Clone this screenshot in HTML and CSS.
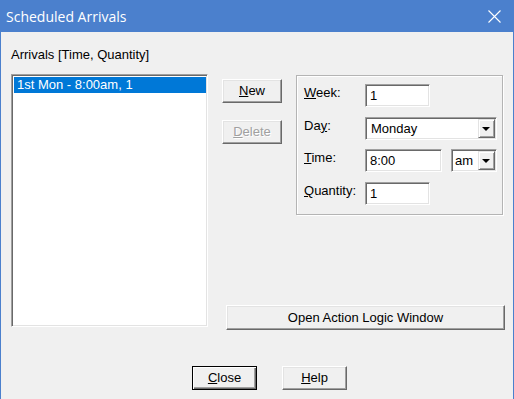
FILE: index.html
```html
<!DOCTYPE html>
<html>
<head lang="en">
    <meta charset="UTF-8">
    <title>Scheduled Arrivals</title>
    <link rel="stylesheet" href="styles.css">
</head>
<body>
<div class="window">
    <div class="titlebar">
        <span class="title">Scheduled Arrivals</span>
        <svg class="close-x" width="13" height="13" viewBox="0 0 13 13">
            <path d="M0.5 0.5 L12.5 12.5 M12.5 0.5 L0.5 12.5" stroke="#fff" stroke-width="1.1" fill="none"/>
        </svg>
    </div>
    <div class="content">
        <div class="caption">Arrivals [Time, Quantity]</div>
        <div class="main">
            <div class="listbox">
                <div class="item selected">1st Mon - 8:00am, 1</div>
            </div>
            <div class="side">
                <div class="top">
                    <div class="btns">
                        <button class="btn"><u>N</u>ew</button>
                        <button class="btn disabled"><u>D</u>elete</button>
                    </div>
                    <div class="group">
                        <label class="lbl"><u>W</u>eek:</label>
                        <div class="field"><span class="input w-short">1</span></div>
                        <label class="lbl">Da<u>y</u>:</label>
                        <div class="field">
                            <span class="combo w-day">Monday<i class="arrow"></i></span>
                        </div>
                        <label class="lbl"><u>T</u>ime:</label>
                        <div class="field">
                            <span class="input w-time">8:00</span>
                            <span class="combo w-ampm">am<i class="arrow"></i></span>
                        </div>
                        <label class="lbl"><u>Q</u>uantity:</label>
                        <div class="field"><span class="input w-short">1</span></div>
                    </div>
                </div>
                <button class="btn wide">Open Action Logic Window</button>
            </div>
        </div>
        <div class="footer">
            <button class="btn foot default"><u>C</u>lose</button>
            <button class="btn foot"><u>H</u>elp</button>
        </div>
    </div>
</div>
</body>
</html>
```

FILE: styles.css
```css
*{
    margin:0;
    padding:0;
    box-sizing:border-box;
}
body{
    background:#f0f0f0;
    font-family:"Liberation Sans", Arial, sans-serif;
    font-size:13px;
    color:#000;
}
.window{
    width:514px;
    height:399px;
    border:1px solid #4b80cd;
    border-top:0;
    border-bottom:0;
    overflow:hidden;
    background:#f0f0f0;
}
.titlebar{
    height:32px;
    margin:0 -1px;
    background:#4b80cd;
    color:#fff;
    display:flex;
    align-items:center;
    justify-content:space-between;
    padding:0 13px 0 6px;
}
.title{
    font-family:"Open Sans", "Noto Sans", sans-serif;
    font-size:14px;
}
.close-x{
    display:block;
}
.content{
    padding:15px 0 0 10px;
}
.caption{
    line-height:16px;
    height:16px;
    margin-bottom:11px;
}
.main{
    display:flex;
    align-items:flex-start;
}
.listbox{
    width:197px;
    height:253px;
    background:#fff;
    border:1px solid;
    border-color:#a0a0a0 #fff #fff #a0a0a0;
    box-shadow:inset 1px 1px #696969, inset -1px -1px #e3e3e3;
    padding:2px 1px 0 2px;
}
.item{
    line-height:16px;
    padding-left:3px;
}
.item.selected{
    background:#0078d7;
    color:#fff;
}
.side{
    margin-left:14px;
    display:flex;
    flex-direction:column;
    align-items:flex-start;
}
.top{
    display:flex;
    align-items:flex-start;
}
.btns{
    display:flex;
    flex-direction:column;
    gap:17px;
    margin-top:5px;
    width:60px;
}
.btn{
    font-family:inherit;
    font-size:13px;
    color:#000;
    background:#f0f0f0;
    border:1px solid;
    border-color:#fff #696969 #696969 #fff;
    box-shadow:inset -1px -1px #a0a0a0, inset 1px 1px #e3e3e3;
    height:24px;
    width:60px;
    line-height:20px;
    text-align:center;
}
.btn.disabled{
    color:#a0a0a0;
    text-shadow:1px 1px #fff;
}
.group{
    margin-left:14px;
    margin-top:1px;
    width:207px;
    height:140px;
    border:1px solid #b4b4b4;
    box-shadow:inset 1px 1px #fff, 1px 1px #fff;
    padding:8px 6px 0 7px;
    display:grid;
    grid-template-columns:61px auto;
    grid-auto-rows:23px;
    row-gap:9.7px;
}
.lbl{
    line-height:18px;
}
.field{
    display:flex;
    gap:9px;
}
.input, .combo{
    position:relative;
    display:block;
    height:23px;
    background:#fff;
    border:1px solid;
    border-color:#a0a0a0 #fff #fff #a0a0a0;
    box-shadow:inset 1px 1px #696969, inset -1px -1px #e3e3e3;
    padding:1px 0 0 4px;
    line-height:19px;
}
.w-short{
    width:65px;
}
.w-time{
    width:77px;
}
.w-day{
    width:132px;
    padding-left:5px;
}
.w-ampm{
    width:46px;
    padding-left:3px;
}
.arrow{
    position:absolute;
    right:1px;
    top:1px;
    width:17px;
    height:19px;
    background:#f0f0f0;
    border:1px solid;
    border-color:#e3e3e3 #696969 #696969 #e3e3e3;
    box-shadow:inset 1px 1px #fff, inset -1px -1px #a0a0a0;
}
.arrow::after{
    content:"";
    position:absolute;
    left:3px;
    top:7px;
    border-left:4px solid transparent;
    border-right:4px solid transparent;
    border-top:4px solid #000;
}
.btn.wide{
    margin-left:4px;
    margin-top:90px;
    width:279px;
    height:25px;
}
.footer{
    display:flex;
    gap:25px;
    margin-top:36px;
    padding-left:181px;
}
.btn.foot{
    width:65px;
}
.btn.default{
    border:1px solid #000;
    box-shadow:inset 1px 1px #fff, inset -1px -1px #696969, inset -2px -2px #a0a0a0;
}
```
